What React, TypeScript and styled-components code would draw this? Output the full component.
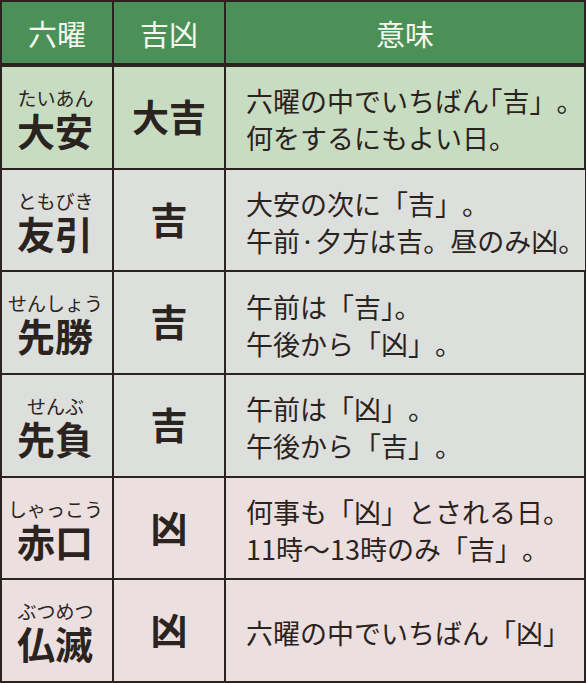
import React from 'react';
import styled, { createGlobalStyle, css } from 'styled-components';

const GlobalStyle = createGlobalStyle`
  html, body { margin: 0; padding: 0; background: #ffffff; }
  body { font-family: "Noto Sans CJK JP", "Noto Sans", sans-serif; color: #2b2320; }
`;

type Tone = 'good' | 'neutral' | 'bad';

const toneBg: Record<Tone, string> = {
  good: '#c8dcc1',
  neutral: '#dcdfdb',
  bad: '#ebdfe0',
};

const Table = styled.div`
  width: 586px;
  height: 683px;
  box-sizing: border-box;
  padding: 2px;
  background: #2b2320;
  display: flex;
  flex-direction: column;
  gap: 2px;
`;

const Row = styled.div<{ $head?: boolean }>`
  display: grid;
  grid-template-columns: 110px 110px 1fr;
  column-gap: 2px;
  ${(p) =>
    p.$head
      ? css`
          height: 61px;
          flex: none;
          margin-bottom: 2px;
        `
      : css`
          flex: 1;
        `}
`;

const HeadCell = styled.div`
  background: #4b9157;
  color: #f6f7ef;
  font-size: 29px;
  font-weight: 400;
  display: flex;
  align-items: center;
  justify-content: center;
  padding-top: 1px;
`;

const Cell = styled.div<{ $tone: Tone }>`
  background: ${(p) => toneBg[p.$tone]};
  display: flex;
  flex-direction: column;
  align-items: center;
  justify-content: center;
`;

const NameCell = styled(Cell)`
  padding-top: 3px;
`;

const Reading = styled.div`
  font-size: 19px;
  line-height: 22px;
  white-space: nowrap;
  margin-right: 3px;
`;

const Name = styled.div`
  font-size: 38px;
  font-weight: 700;
  line-height: 42px;
  margin-right: 4px;
`;

const Fortune = styled.div`
  font-size: 37px;
  font-weight: 700;
  line-height: 44px;
  padding-bottom: 3px;
`;

const MeaningCell = styled(Cell)`
  align-items: flex-start;
  padding: 4px 0 0 20px;
`;

const Line = styled.div`
  font-size: 27px;
  line-height: 37px;
  white-space: nowrap;
  text-spacing-trim: space-all;
`;

/* half-width bracket, as the typesetting of the reference does in places */
const Tight = styled.span`
  font-feature-settings: "halt";
`;

type Day = {
  reading: string;
  name: string;
  fortune: string;
  tone: Tone;
  lines: React.ReactNode[];
};

const days: Day[] = [
  {
    reading: 'たいあん',
    name: '大安',
    fortune: '大吉',
    tone: 'good',
    lines: [
      <>六曜の中でいちばん<Tight>「</Tight>吉」。</>,
      '何をするにもよい日。',
    ],
  },
  {
    reading: 'ともびき',
    name: '友引',
    fortune: '吉',
    tone: 'neutral',
    lines: ['大安の次に「吉」。', '午前·夕方は吉。昼のみ凶。'],
  },
  {
    reading: 'せんしょう',
    name: '先勝',
    fortune: '吉',
    tone: 'neutral',
    lines: [<>午前は「吉<Tight>」</Tight>。</>, '午後から「凶」。'],
  },
  {
    reading: 'せんぶ',
    name: '先負',
    fortune: '吉',
    tone: 'neutral',
    lines: ['午前は「凶」。', '午後から「吉」。'],
  },
  {
    reading: 'しゃっこう',
    name: '赤口',
    fortune: '凶',
    tone: 'bad',
    lines: ['何事も「凶」とされる日。', '11時〜13時のみ「吉」。'],
  },
  {
    reading: 'ぶつめつ',
    name: '仏滅',
    fortune: '凶',
    tone: 'bad',
    lines: ['六曜の中でいちばん「凶」'],
  },
];

export default function App() {
  return (
    <>
      <GlobalStyle />
      <Table>
        <Row $head>
          <HeadCell>六曜</HeadCell>
          <HeadCell>吉凶</HeadCell>
          <HeadCell>意味</HeadCell>
        </Row>
        {days.map((d) => (
          <Row key={d.name}>
            <NameCell $tone={d.tone}>
              <Reading>{d.reading}</Reading>
              <Name>{d.name}</Name>
            </NameCell>
            <Cell $tone={d.tone}>
              <Fortune>{d.fortune}</Fortune>
            </Cell>
            <MeaningCell $tone={d.tone}>
              {d.lines.map((l, i) => (
                <Line key={i}>{l}</Line>
              ))}
            </MeaningCell>
          </Row>
        ))}
      </Table>
    </>
  );
}
